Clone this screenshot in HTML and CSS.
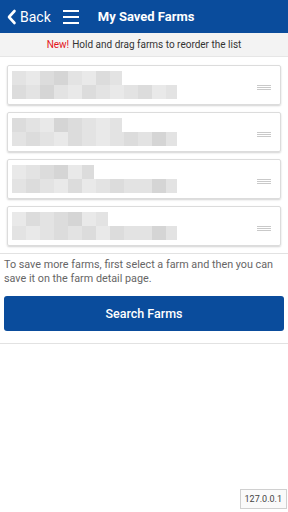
FILE: index.html
```html
<!DOCTYPE html>
<html lang="en">
<head>
    <meta charset="UTF-8">
    <meta name="viewport" content="width=device-width, initial-scale=1.0">
    <title>My Saved Farms</title>
    <link rel="stylesheet" href="styles.css">
</head>
<body>
    <header class="topbar">
        <a class="back" href="#">
            <svg width="11" height="16" viewBox="0 0 11 16"><path d="M8.5 2 L3 8 L8.5 14" fill="none" stroke="#fff" stroke-width="2.6" stroke-linecap="round" stroke-linejoin="round"/></svg>
            <span>Back</span>
        </a>
        <button class="menu" aria-label="Menu">
            <span></span><span></span><span></span>
        </button>
        <h1>My Saved Farms</h1>
    </header>

    <div class="notice"><span class="new">New!</span> Hold and drag farms to reorder the list</div>

    <ul class="farms">
        <li class="farm">
            <div class="blur">
                <div class="row r1"><i class="a"></i><i class="c"></i><i class="b"></i><i class="d"></i><i class="a"></i><i class="c"></i><i class="b"></i><i class="a"></i></div>
                <div class="row r2"><i class="b"></i><i class="a"></i><i class="d"></i><i class="a"></i><i class="c"></i><i class="b"></i><i class="a"></i><i class="c"></i><i class="a"></i><i class="b"></i><i class="c"></i><i class="a"></i></div>
            </div>
            <div class="handle"><span></span><span></span><span></span></div>
        </li>
        <li class="farm">
            <div class="blur">
                <div class="row r1"><i class="b"></i><i class="a"></i><i class="c"></i><i class="d"></i><i class="b"></i><i class="a"></i><i class="c"></i><i class="a"></i></div>
                <div class="row r2"><i class="a"></i><i class="b"></i><i class="a"></i><i class="c"></i><i class="b"></i><i class="a"></i><i class="c"></i><i class="a"></i><i class="b"></i><i class="a"></i><i class="d"></i><i class="a"></i></div>
            </div>
            <div class="handle"><span></span><span></span><span></span></div>
        </li>
        <li class="farm">
            <div class="blur">
                <div class="row r1"><i class="c"></i><i class="a"></i><i class="b"></i><i class="d"></i><i class="c"></i><i class="b"></i></div>
                <div class="row r2"><i class="a"></i><i class="b"></i><i class="a"></i><i class="c"></i><i class="b"></i><i class="c"></i><i class="a"></i><i class="b"></i><i class="a"></i><i class="a"></i><i class="d"></i><i class="a"></i></div>
            </div>
            <div class="handle"><span></span><span></span><span></span></div>
        </li>
        <li class="farm">
            <div class="blur">
                <div class="row r1"><i class="c"></i><i class="b"></i><i class="a"></i><i class="b"></i><i class="d"></i><i class="c"></i><i class="a"></i></div>
                <div class="row r2"><i class="a"></i><i class="c"></i><i class="a"></i><i class="b"></i><i class="a"></i><i class="b"></i><i class="c"></i><i class="b"></i><i class="a"></i><i class="a"></i><i class="d"></i><i class="a"></i></div>
            </div>
            <div class="handle"><span></span><span></span><span></span></div>
        </li>
    </ul>

    <section class="more">
        <p>To save more farms, first select a farm and then you can save it on the farm detail page.</p>
        <button class="search">Search Farms</button>
    </section>

    <div class="host">127.0.0.1</div>
</body>
</html>
```

FILE: styles.css
```css
:root {
    --blue: #0a4c9c;
    --line: #e2e2e2;
    --text: #666;
}

* {
    box-sizing: border-box;
}

body {
    margin: 0;
    font-family: Roboto, "Liberation Sans", Arial, sans-serif;
    background: #fff;
    color: var(--text);
    width: 288px;
    height: 512px;
    position: relative;
    overflow: hidden;
}

.topbar {
    height: 33px;
    background: var(--blue);
    display: flex;
    align-items: center;
    padding-left: 6px;
    color: #fff;
}

.back {
    display: flex;
    align-items: center;
    gap: 3px;
    color: #fff;
    text-decoration: none;
    font-size: 14px;
}

.menu {
    background: none;
    border: none;
    padding: 0;
    margin-left: 12px;
    width: 16px;
    display: flex;
    flex-direction: column;
    gap: 4px;
}

.menu span {
    display: block;
    height: 2px;
    background: #fff;
}

.topbar h1 {
    margin: 0 0 0 19px;
    font-size: 13px;
    font-weight: bold;
}

.notice {
    height: 24px;
    background: #f3f3f3;
    border-bottom: 1px solid #e6e6e6;
    font-size: 10px;
    color: #333;
    display: flex;
    align-items: center;
    justify-content: center;
}

.new {
    color: #e4141b;
    margin-right: 3px;
}

.farms {
    list-style: none;
    margin: 0;
    padding: 8px 7px 0;
    display: flex;
    flex-direction: column;
    gap: 7px;
}

.farm {
    height: 40px;
    border: 1px solid #dcdcdc;
    border-radius: 2px;
    box-shadow: 0 1px 2px rgba(0, 0, 0, 0.18);
    display: flex;
    align-items: center;
    justify-content: space-between;
    padding: 0 9px 0 4px;
}

.blur {
    display: flex;
    flex-direction: column;
}

.row {
    display: flex;
    height: 14px;
}

.row i {
    width: 14px;
    height: 14px;
    background: #e4e4e4;
}

.row.r1 i:last-child {
    width: 12px;
}

.row.r2 i:last-child {
    width: 11px;
}

.row i.a { background: #e3e3e3; }
.row i.b { background: #dcdcdc; }
.row i.c { background: #e9e9e9; }
.row i.d { background: #d5d5d5; }

.handle {
    width: 14px;
    display: flex;
    flex-direction: column;
    gap: 1px;
    margin-top: 4px;
}

.handle span {
    height: 1px;
    background: #c9c9c9;
}

.more {
    margin-top: 7px;
    border-top: 1px solid var(--line);
    border-bottom: 1px solid var(--line);
    padding: 4px 4px 12px;
}

.more p {
    margin: 0 0 10px;
    font-size: 10.8px;
    line-height: 14px;
    color: var(--text);
}

.search {
    width: 100%;
    height: 35px;
    border: none;
    border-radius: 3px;
    background: var(--blue);
    color: #fff;
    font-family: inherit;
    font-size: 12.5px;
    font-weight: 500;
}

.host {
    position: absolute;
    right: 1px;
    bottom: 3px;
    border: 1px solid #d0d0d0;
    background: #fafafa;
    font-size: 9px;
    color: #444;
    padding: 4px 4px;
}
```
